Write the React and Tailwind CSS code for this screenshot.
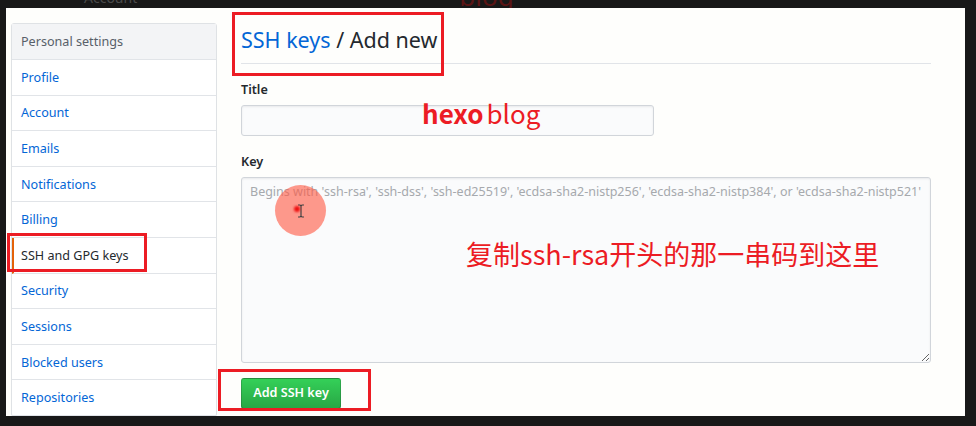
import React from "react";

const sans = "font-['Noto_Sans','Noto_Sans_CJK_SC',sans-serif]";

const menu = [
  "Profile",
  "Account",
  "Emails",
  "Notifications",
  "Billing",
  "SSH and GPG keys",
  "Security",
  "Sessions",
  "Blocked users",
  "Repositories",
];

const Sidebar = () => (
  <div className="ml-[5px] mt-[15px] w-[206px] shrink-0 self-start border border-[#dfe2e5] rounded-[3px] bg-white">
    <div className="h-[36px] flex items-center pt-[1px] px-[9px] bg-[#f3f4f6] border-b border-[#e1e4e8] text-[12.6px] text-[#586069]">
      Personal settings
    </div>
    {menu.map((name) =>
      name === "SSH and GPG keys" ? (
        <div
          key={name}
          className="h-[35.6px] flex items-center pt-[2px] pl-[7px] border-l-2 border-l-[#e36209] border-b border-b-[#e1e4e8] text-[12.6px] text-[#24292e]"
        >
          {name}
        </div>
      ) : (
        <div
          key={name}
          className="h-[35.6px] flex items-center pt-[2px] px-[9px] border-b border-[#e1e4e8] text-[12.6px] text-[#0366d6]"
        >
          {name}
        </div>
      )
    )}
  </div>
);

const Main = () => (
  <div className="ml-[24px] w-[690px] shrink-0 flex flex-col">
    {/* heading */}
    <div className="pt-[16px] pb-[7px] border-b border-[#e1e4e8] text-[21.5px] leading-[32px] text-[#24292e]">
      <span className="text-[#0366d6]">SSH keys</span> / Add new
    </div>

    {/* title */}
    <label className="mt-[16px] text-[12.6px] leading-[20px] font-semibold text-[#24292e]">
      Title
    </label>
    <input
      className="mt-[5px] w-[413px] h-[31px] px-[8px] bg-[#fafbfc] border border-[#d1d5da] rounded-[3px] shadow-[inset_0_1px_2px_rgba(27,31,35,0.075)] text-[12.6px] outline-none"
      type="text"
    />

    {/* key */}
    <label className="mt-[16px] text-[12.6px] leading-[20px] font-semibold text-[#24292e]">
      Key
    </label>
    <textarea
      className="mt-[5px] w-[690px] h-[186px] px-[8px] pt-[5px] bg-[#fafbfc] border border-[#d1d5da] rounded-[3px] shadow-[inset_0_1px_2px_rgba(27,31,35,0.075)] text-[12.5px] leading-[18px] text-[#24292e] placeholder:text-[#a6a9ad] outline-none"
      placeholder="Begins with 'ssh-rsa', 'ssh-dss', 'ssh-ed25519', 'ecdsa-sha2-nistp256', 'ecdsa-sha2-nistp384', or 'ecdsa-sha2-nistp521'"
    />

    <div className="mt-[15px]">
      <button className="w-[100px] h-[31px] rounded-[3px] border border-[rgba(27,31,35,0.2)] bg-gradient-to-b from-[#34d058] to-[#28a745] text-white text-[12.6px] font-semibold">
        Add SSH key
      </button>
    </div>
  </div>
);

const Cursor = () => (
  <svg width="8" height="14" viewBox="0 0 8 14" className="block">
    <path d="M1 1h2l1 1 1-1h2M4 2v10M1 13h2l1-1 1 1h2" fill="none" stroke="#444" strokeWidth="1.2" />
  </svg>
);

export default function App() {
  return (
    <div className={`w-[976px] h-[426px] bg-[#181818] overflow-hidden flex flex-col ${sans}`}>
      {/* ghost of previous frame */}
      <div className="h-[8px] shrink-0 overflow-hidden flex">
        <span className="ml-[84px] -mt-[10px] text-[14px] leading-[16px] text-[#4a4a4a]">Account</span>
        <span className="ml-[322px] -mt-[17px] text-[26px] leading-[26px] text-[#5a1414]">blog</span>
      </div>

      <div className="ml-[6px] w-[959px] h-[408px] shrink-0 bg-[#fefefc] relative overflow-hidden flex">
        <Sidebar />
        <Main />

        {/* annotations */}
        <div className="absolute left-[226px] top-[4px] w-[212px] h-[64px] border-[3px] border-[#ec1c24]" />
        <div className="absolute left-[1px] top-[225px] w-[140px] h-[39px] border-[3px] border-[#ec1c24]" />
        <div className="absolute left-[212px] top-[361px] w-[153px] h-[42px] border-[3px] border-[#ec1c24]" />

        <div className="absolute left-[416px] top-[92px] flex items-baseline gap-[3px] text-[26px] leading-[26px] text-[#ec1c24] font-['Noto_Sans_CJK_SC',sans-serif]">
          <span className="font-bold">hexo</span>
          <span>blog</span>
        </div>

        <div className="absolute left-[460px] top-[232px] text-[27px] leading-[27px] text-[#ec1c24] font-['Noto_Sans_CJK_SC',sans-serif]">
          复制ssh-rsa开头的那一串码到这里
        </div>

        <div className="absolute left-[269px] top-[177px] w-[51px] h-[51px] rounded-full bg-[rgba(255,90,70,0.62)] flex items-center justify-center">
          <div className="relative">
            <Cursor />
            <div className="absolute left-[-3px] top-[2px] w-[6px] h-[6px] rounded-full bg-[#ee1111] blur-[1px]" />
          </div>
        </div>
      </div>
    </div>
  );
}
